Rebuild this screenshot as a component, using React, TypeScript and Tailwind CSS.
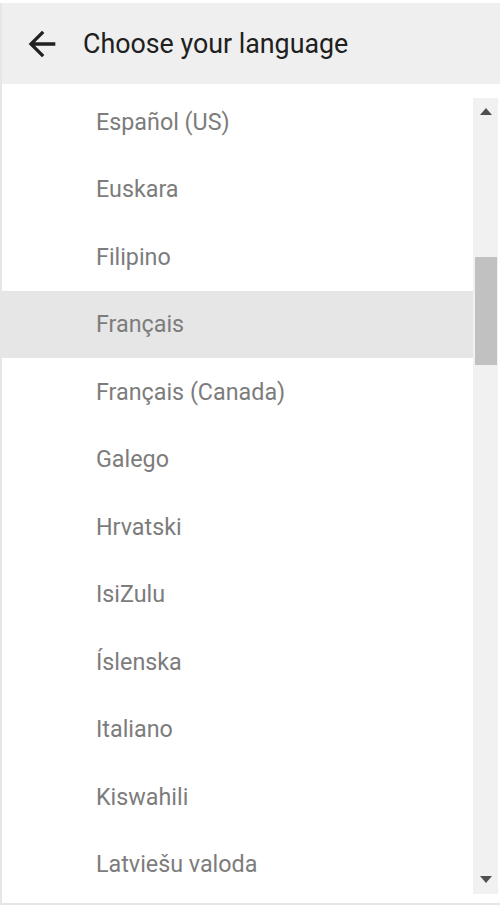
const languages = [
  "Español (US)",
  "Euskara",
  "Filipino",
  "Français",
  "Français (Canada)",
  "Galego",
  "Hrvatski",
  "IsiZulu",
  "Íslenska",
  "Italiano",
  "Kiswahili",
  "Latviešu valoda",
];

const App = () => {
  return (
    <div className="w-[500px] h-[910px] bg-white pt-[3px] font-['Roboto',sans-serif] overflow-hidden">
      <div className="h-[902px] border-l-2 border-b-2 border-[#e6e6e6] flex flex-col">
        <div className="h-[81px] bg-[#efefef] flex items-center shrink-0">
          <svg
            className="ml-[20px] shrink-0"
            width="40"
            height="40"
            viewBox="0 0 24 24"
            fill="#202020"
          >
            <path d="M20 11H7.83l5.59-5.59L12 4l-8 8 8 8 1.41-1.41L7.83 13H20v-2z" />
          </svg>
          <h1 className="ml-[21px] mt-[2px] text-[26.8px] text-[#202020]">
            Choose your language
          </h1>
        </div>
        <div className="flex flex-1 min-h-0">
          <ul className="w-[471px] pt-[4px] overflow-hidden">
            {languages.map((lang) => (
              <li
                key={lang}
                className={`h-[67.5px] flex items-center pl-[94px] pt-[1px] text-[23.3px] text-[#7c7c7c] ${
                  lang === "Français" ? "bg-[#e6e6e6]" : ""
                }`}
              >
                {lang}
              </li>
            ))}
          </ul>
          <div className="flex-1 pt-[14px] pr-[2px] pb-[9px]">
            <div className="h-full bg-[#f1f1f1] flex flex-col items-center">
              <div className="h-[27px] w-full flex items-center justify-center">
                <div className="w-0 h-0 border-l-[6px] border-r-[6px] border-b-[7px] border-l-transparent border-r-transparent border-b-[#505050]" />
              </div>
              <div className="h-[132px]" />
              <div className="h-[108px] w-[22px] bg-[#c1c1c1]" />
              <div className="flex-1" />
              <div className="h-[30px] w-full flex items-center justify-center">
                <div className="w-0 h-0 border-l-[6px] border-r-[6px] border-t-[7px] border-l-transparent border-r-transparent border-t-[#505050]" />
              </div>
            </div>
          </div>
        </div>
      </div>
    </div>
  );
};

export default App;
